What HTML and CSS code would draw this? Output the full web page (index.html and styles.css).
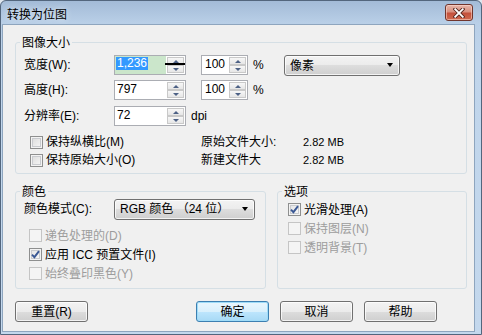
FILE: index.html
```html
<!DOCTYPE html>
<html lang="zh-CN">
<head>
<meta charset="utf-8">
<title>转换为位图</title>
<link rel="stylesheet" href="styles.css">
</head>
<body>
<div class="window">
  <div class="titlebar">
    <span class="title">转换为位图</span>
    <span class="close">
      <svg width="12" height="10" viewBox="0 0 12 10"><path d="M2.2 1.2 L9.8 8.8 M9.8 1.2 L2.2 8.8" stroke="#5a2a22" stroke-width="3.6" stroke-linecap="square"/><path d="M2.2 1.2 L9.8 8.8 M9.8 1.2 L2.2 8.8" stroke="#ffffff" stroke-width="1.8" stroke-linecap="square"/></svg>
    </span>
  </div>
  <div class="client">
    <fieldset class="group group-size">
      <legend>图像大小</legend>
      <div class="size-body">
        <div class="field-row">
          <span class="label">宽度(W):</span>
          <span class="spin spin-main spin-active">
            <span class="spin-val"><span class="selected">1,236</span></span>
            <span class="spin-btns"><span class="spin-up"></span><span class="spin-down"></span></span>
            <span class="caret-line"></span>
          </span>
          <span class="spin spin-pct">
            <span class="spin-val">100</span>
            <span class="spin-btns"><span class="spin-up"></span><span class="spin-down"></span></span>
          </span>
          <span class="unit">%</span>
          <span class="combo combo-unit"><span class="combo-text">像素</span><span class="combo-arrow"></span></span>
        </div>
        <div class="field-row row-2">
          <span class="label">高度(H):</span>
          <span class="spin spin-main">
            <span class="spin-val">797</span>
            <span class="spin-btns"><span class="spin-up"></span><span class="spin-down"></span></span>
          </span>
          <span class="spin spin-pct">
            <span class="spin-val">100</span>
            <span class="spin-btns"><span class="spin-up"></span><span class="spin-down"></span></span>
          </span>
          <span class="unit">%</span>
        </div>
        <div class="field-row row-3">
          <span class="label">分辨率(E):</span>
          <span class="spin spin-main">
            <span class="spin-val">72</span>
            <span class="spin-btns"><span class="spin-up"></span><span class="spin-down"></span></span>
          </span>
          <span class="dpi">dpi</span>
        </div>
        <div class="check-row row-4">
          <span class="check-cell"><span class="cb"></span>保持纵横比(M)</span>
          <span class="info-label">原始文件大小:</span>
          <span class="info-val">2.82 MB</span>
        </div>
        <div class="check-row">
          <span class="check-cell"><span class="cb"></span>保持原始大小(O)</span>
          <span class="info-label">新建文件大</span>
          <span class="info-val">2.82 MB</span>
        </div>
      </div>
    </fieldset>

    <div class="lower">
      <fieldset class="group group-color">
        <legend>颜色</legend>
        <div class="color-body">
          <div class="field-row">
            <span class="label">颜色模式(C):</span>
            <span class="combo combo-mode"><span class="combo-text">RGB 颜色 （24 位）</span><span class="combo-arrow"></span></span>
          </div>
          <div class="opt-list color-opts">
            <span class="opt disabled"><span class="cb"></span>递色处理的(D)</span>
            <span class="opt"><span class="cb checked"><svg width="9" height="9" viewBox="0 0 9 9"><path d="M1 4.6 L3.4 7.2 L8 1.2" fill="none" stroke="#3a5894" stroke-width="1.9"/></svg></span>应用 ICC 预置文件(I)</span>
            <span class="opt disabled"><span class="cb"></span>始终叠印黑色(Y)</span>
          </div>
        </div>
      </fieldset>
      <fieldset class="group group-opts">
        <legend>选项</legend>
        <div class="opt-list opts-body">
          <span class="opt"><span class="cb checked"><svg width="9" height="9" viewBox="0 0 9 9"><path d="M1 4.6 L3.4 7.2 L8 1.2" fill="none" stroke="#3a5894" stroke-width="1.9"/></svg></span>光滑处理(A)</span>
          <span class="opt disabled"><span class="cb"></span>保持图层(N)</span>
          <span class="opt disabled"><span class="cb"></span>透明背景(T)</span>
        </div>
      </fieldset>
    </div>

    <div class="buttons">
      <span class="btn btn-reset">重置(R)</span>
      <span class="btn btn-default">确定</span>
      <span class="btn">取消</span>
      <span class="btn">帮助</span>
    </div>
  </div>
</div>
</body>
</html>
```

FILE: styles.css
```css
* { box-sizing: border-box; }
html, body { margin: 0; padding: 0; }
body {
  width: 482px;
  height: 335px;
  overflow: hidden;
  background: #dfe6ee;
  font-family: "Liberation Sans", "Noto Sans CJK SC", sans-serif;
  font-size: 12px;
  line-height: 14px;
  color: #000;
}

.window {
  width: 482px;
  height: 335px;
  border: 1px solid #53667d;
  border-radius: 6px 6px 0 0;
  background: linear-gradient(#a3bbd7 0, #b9cfe7 22px, #c0d5eb 60px, #c4d8ed 100%);
  display: flex;
  flex-direction: column;
}

.titlebar {
  height: 23px;
  display: flex;
  justify-content: space-between;
  align-items: flex-start;
  padding: 0 8px 0 6px;
}
.title {
  line-height: 25px;
  font-family: "Noto Sans CJK SC", sans-serif;
  font-size: 12px;
  color: #000;
  text-shadow: 0 0 6px rgba(255, 255, 255, 0.8);
}
.close {
  margin-top: 3px;
  width: 28px;
  height: 17px;
  border: 1px solid #71352c;
  border-radius: 3px;
  background: linear-gradient(#e7b6aa 0, #d9907f 45%, #c4503b 55%, #cf6a50 100%);
  box-shadow: inset 0 0 0 1px rgba(255, 220, 210, 0.55);
  display: flex;
  align-items: center;
  justify-content: center;
}

.client {
  flex: 1;
  margin: 0 6px 2px 1px;
  border: 1px solid #8ea5be;
  background: #f0f0f0;
  display: flex;
  flex-direction: column;
}

/* group boxes */
.group {
  margin: 0;
  padding: 0;
  min-width: 0;
  border: 1px solid #d5dfe5;
  border-radius: 3px;
}
.group legend {
  margin-left: 4px;
  padding: 0 2px;
  line-height: 14px;
  font-family: "Noto Sans CJK SC", sans-serif;
  font-size: 12px;
}
.group-size { margin: 10px 7px 0 12px; }
.size-body { padding: 6px 8px 4px 8px; }

.field-row {
  display: flex;
  align-items: center;
  height: 20px;
}
.row-2 { margin-top: 5px; }
.row-3 { margin-top: 6px; }
.label { width: 90px; flex: none; }

/* spin boxes */
.spin {
  position: relative;
  display: flex;
  height: 20px;
  border: 1px solid #abadb3;
  background: #fff;
  flex: none;
}
.spin-main { width: 72px; }
.spin-pct { width: 47px; margin-left: 15px; }
.spin-val {
  flex: 1;
  padding-left: 2px;
  line-height: 16px;
  white-space: nowrap;
  overflow: hidden;
}
.spin-pct .spin-val { padding-left: 3px; }
.spin-active .spin-val { background: #cbe6cb; padding-left: 1px; }
.selected {
  display: inline-block;
  background: #3399ff;
  color: #fff;
  padding: 0 1px;
  line-height: 13px;
  vertical-align: top;
  margin-top: 1px;
}
.spin-btns {
  width: 19px;
  flex: none;
  display: flex;
  flex-direction: column;
  padding: 1px;
  gap: 0;
}
.spin-up, .spin-down {
  flex: 1;
  border: 1px solid #c9c9c9;
  background: linear-gradient(#f7f7f7, #e6e6e6);
  display: flex;
  align-items: center;
  justify-content: center;
}
.spin-up::before {
  content: "";
  border-left: 3px solid transparent;
  border-right: 3px solid transparent;
  border-bottom: 3px solid #4d6185;
}
.spin-down::before {
  content: "";
  border-left: 3px solid transparent;
  border-right: 3px solid transparent;
  border-top: 3px solid #4d6185;
}
.caret-line {
  position: absolute;
  left: 50px;
  top: 7px;
  width: 20px;
  height: 2px;
  background: #000;
}

.unit { width: 36px; padding-left: 5px; flex: none; }
.dpi { margin-left: 5px; }

/* combo boxes & buttons */
.combo, .btn {
  border: 1px solid #707070;
  border-radius: 3px;
  background: linear-gradient(#f3f3f3 0, #ebebeb 50%, #dddddd 50%, #cfcfcf 100%);
  box-shadow: inset 0 0 0 1px rgba(255, 255, 255, 0.75);
}
.combo {
  display: flex;
  align-items: center;
  justify-content: space-between;
  height: 21px;
  padding: 0 6px 0 5px;
  flex: none;
  font-family: "Noto Sans CJK SC", sans-serif;
}
.combo-unit { width: 116px; }
.combo-mode { width: 141px; font-family: "Liberation Sans", "Noto Sans CJK SC", sans-serif; }
.combo-arrow {
  width: 0;
  height: 0;
  border-left: 3.5px solid transparent;
  border-right: 3.5px solid transparent;
  border-top: 4px solid #000;
}

/* checkbox rows */
.check-row {
  display: flex;
  align-items: center;
  height: 18px;
}
.row-4 { margin-top: 7px; }
.check-cell {
  width: 177px;
  flex: none;
  display: flex;
  align-items: center;
  padding-left: 6px;
}
.info-label { width: 102px; flex: none; }
.info-val { font-size: 11px; }

.cb {
  width: 13px;
  height: 13px;
  flex: none;
  margin-right: 3px;
  border: 1px solid #8e8f8f;
  background: linear-gradient(135deg, #d9d9d9, #f9f9f9);
  box-shadow: inset 0 0 0 1px #f3f3f3, inset 0 0 0 2px #c9cbcf;
  display: flex;
  align-items: center;
  justify-content: center;
}
.cb.checked { background: linear-gradient(135deg, #e1e1e1, #fbfbfb); }
.opt.disabled { color: #9d9d9d; }
.opt.disabled .cb {
  border-color: #c5c5c5;
  background: #f4f4f4;
  box-shadow: none;
}

.lower {
  display: flex;
  gap: 11px;
  margin: 10px 7px 0 12px;
}
.group-color { width: 251px; flex: none; }
.group-opts { flex: 1; }
.color-body { padding: 1px 8px 5px 8px; }
.combo-mode { height: 21px; }
.color-opts { margin-top: 7px; padding-left: 5px; }
.opts-body { padding: 2px 8px 0 10px; }
.opt-list { display: flex; flex-direction: column; }
.opt {
  display: flex;
  align-items: center;
  height: 19px;
}

/* buttons */
.buttons {
  display: flex;
  gap: 11px;
  margin: 12px 0 0 12px;
}
.btn {
  width: 73px;
  height: 21px;
  display: flex;
  align-items: center;
  justify-content: center;
  flex: none;
}
.btn-reset { margin-right: 97px; }
.btn-default {
  border-color: #3c7fb1;
  background: linear-gradient(#eaf6fd 0, #d9f0fc 50%, #bee6fd 50%, #a7d9f5 100%);
  box-shadow: inset 0 0 0 1px #9fdcf8;
}
```
